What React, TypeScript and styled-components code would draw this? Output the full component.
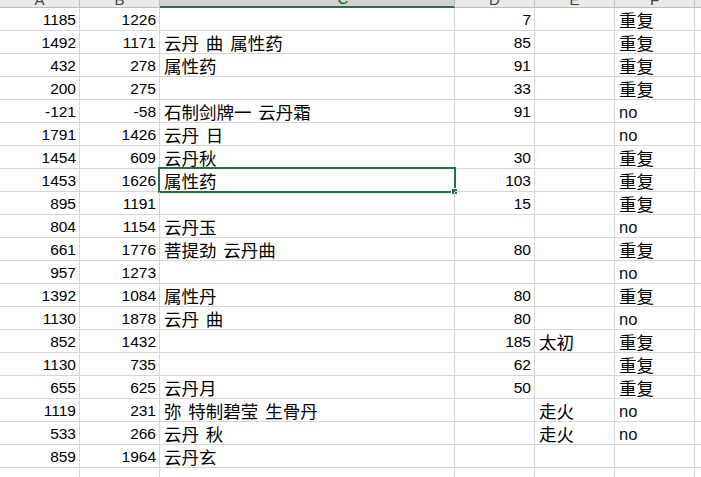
import React from "react";
import styled, { createGlobalStyle } from "styled-components";

const GlobalStyle = createGlobalStyle`
  html, body { margin: 0; padding: 0; background: #ffffff; overflow: hidden; }
  #root { width: 701px; height: 477px; overflow: hidden; }
`;

const GRID = "#d6d6d6";
const GREEN = "#217346";

const Sheet = styled.div`
  display: grid;
  grid-template-columns: 80px 80px 295px 80px 80px 80px 1fr;
  grid-template-rows: 8px;
  grid-auto-rows: 23px;
  width: 701px;
  background: #ffffff;
`;

const Row = styled.div`
  display: contents;
`;

const HeaderCell = styled.div<{ $selected?: boolean; $shift?: number }>`
  box-sizing: border-box;
  display: flex;
  align-items: flex-end;
  justify-content: center;
  padding-left: ${(p) => p.$shift ?? 0}px;
  overflow: hidden;
  background: ${(p) => (p.$selected ? "#d2d2d2" : "#e9e9e9")};
  border-right: 1px solid #bdbdbd;
  border-bottom: ${(p) => (p.$selected ? `2px solid ${GREEN}` : "1px solid #bdbdbd")};
`;

const HeaderLabel = styled.span<{ $selected?: boolean }>`
  font-family: "Liberation Sans", Arial, sans-serif;
  font-size: 15px;
  line-height: 15px;
  color: ${(p) => (p.$selected ? "#1e5a37" : "#444444")};
`;

const Cell = styled.div`
  box-sizing: border-box;
  position: relative;
  display: flex;
  align-items: flex-end;
  padding: 0 3px 1px 4px;
  border-right: 1px solid ${GRID};
  border-bottom: 1px solid ${GRID};
  white-space: nowrap;
  color: #000000;
`;

const NumCell = styled(Cell)`
  justify-content: flex-end;
  font-family: "Liberation Sans", Arial, sans-serif;
  font-size: 15.5px;
  line-height: 18px;
`;

const TextCell = styled(Cell)`
  justify-content: flex-start;
  font-family: "Liberation Sans", "Noto Sans CJK SC", sans-serif;
  font-size: 17.5px;
  line-height: 18px;
  word-spacing: 2px;
  padding-bottom: 0;
`;

const LatinText = styled.span`
  font-family: "Liberation Sans", Arial, sans-serif;
  font-size: 16.5px;
  line-height: 18px;
  padding-bottom: 1px;
  color: #111111;
`;

const Selection = styled.div`
  position: absolute;
  left: -2px;
  top: -2px;
  right: -2px;
  bottom: -2px;
  border: 2px solid ${GREEN};
  pointer-events: none;
`;

const FillHandle = styled.div`
  position: absolute;
  right: -4px;
  bottom: -4px;
  width: 5px;
  height: 5px;
  background: ${GREEN};
  border: 1px solid #ffffff;
`;

type RowData = [string, string, string, string, string, string];

const rows: RowData[] = [
  ["1185", "1226", "", "7", "", "重复"],
  ["1492", "1171", "云丹 曲 属性药", "85", "", "重复"],
  ["432", "278", "属性药", "91", "", "重复"],
  ["200", "275", "", "33", "", "重复"],
  ["-121", "-58", "石制剑牌一 云丹霜", "91", "", "no"],
  ["1791", "1426", "云丹 日", "", "", "no"],
  ["1454", "609", "云丹秋", "30", "", "重复"],
  ["1453", "1626", "属性药", "103", "", "重复"],
  ["895", "1191", "", "15", "", "重复"],
  ["804", "1154", "云丹玉", "", "", "no"],
  ["661", "1776", "菩提劲 云丹曲", "80", "", "重复"],
  ["957", "1273", "", "", "", "no"],
  ["1392", "1084", "属性丹", "80", "", "重复"],
  ["1130", "1878", "云丹 曲", "80", "", "no"],
  ["852", "1432", "", "185", "太初", "重复"],
  ["1130", "735", "", "62", "", "重复"],
  ["655", "625", "云丹月", "50", "", "重复"],
  ["1119", "231", "弥 特制碧莹 生骨丹", "", "走火", "no"],
  ["533", "266", "云丹 秋", "", "走火", "no"],
  ["859", "1964", "云丹玄", "", "", ""],
  ["", "", "", "", "", ""],
];

const SELECTED_ROW = 7;

const headers: { label: string; selected?: boolean; shift?: number }[] = [
  { label: "A" },
  { label: "B" },
  { label: "C", selected: true, shift: 72 },
  { label: "D" },
  { label: "E" },
  { label: "F" },
  { label: "" },
];

const isLatin = (s: string) => /^[\x20-\x7e]+$/.test(s);

function TextContent({ value }: { value: string }) {
  if (!value) return null;
  return isLatin(value) ? <LatinText>{value}</LatinText> : <>{value}</>;
}

export default function App() {
  return (
    <>
      <GlobalStyle />
      <Sheet>
        <Row>
          {headers.map((h, i) => (
            <HeaderCell key={i} $selected={h.selected} $shift={h.shift}>
              <HeaderLabel $selected={h.selected}>{h.label}</HeaderLabel>
            </HeaderCell>
          ))}
        </Row>
        {rows.map((r, i) => (
          <Row key={i}>
            <NumCell>{r[0]}</NumCell>
            <NumCell>{r[1]}</NumCell>
            <TextCell>
              <TextContent value={r[2]} />
              {i === SELECTED_ROW && (
                <Selection>
                  <FillHandle />
                </Selection>
              )}
            </TextCell>
            <NumCell>{r[3]}</NumCell>
            <TextCell>
              <TextContent value={r[4]} />
            </TextCell>
            <TextCell>
              <TextContent value={r[5]} />
            </TextCell>
            <TextCell />
          </Row>
        ))}
      </Sheet>
    </>
  );
}
